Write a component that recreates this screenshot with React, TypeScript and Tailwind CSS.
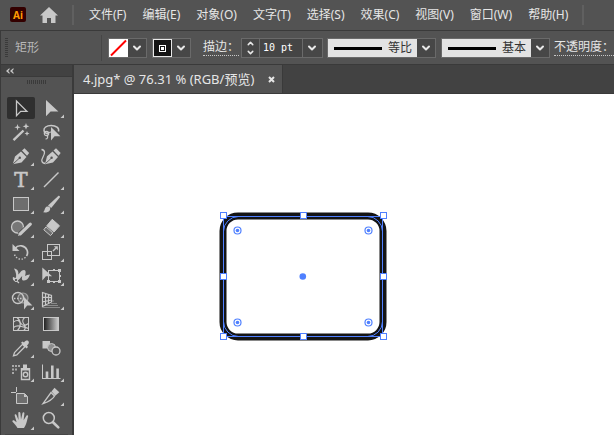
import React, { useState } from "react";
import { ChevronDown, ChevronUp } from "lucide-react";

const menus = ["文件(F)", "编辑(E)", "对象(O)", "文字(T)", "选择(S)", "效果(C)", "视图(V)", "窗口(W)", "帮助(H)"];

const C = "#c8c8c8";
const BG = "#535353";

type Tool = { name: string; more?: boolean; icon: React.ReactNode };

// every icon is drawn on a 30x24 cell
const tools: Tool[] = [
  {
    name: "选择工具",
    icon: <path d="M10.5 5v14.6l4.2-4.2h6.2z" fill="none" stroke={C} strokeWidth="1.3" />,
  },
  {
    name: "直接选择工具",
    more: true,
    icon: <path d="M10 4v16.3l4.6-4.8h7.8z" fill={C} />,
  },
  {
    name: "魔棒工具",
    icon: (
      <>
        <path d="M7.5 20.2L17.5 10.5" stroke={C} strokeWidth="2.4" />
        <path d="M11.5 4l.8 2.5 2.5.8-2.5.8-.8 2.5-.8-2.5-2.5-.8 2.5-.8zM20 3l.9 2.4 2.4.9-2.4.9L20 9.6l-.9-2.4-2.4-.9 2.4-.9zM21 11l.7 1.8 1.8.7-1.8.7-.7 1.8-.7-1.8-1.8-.7 1.8-.7z" fill={C} />
      </>
    ),
  },
  {
    name: "套索工具",
    icon: (
      <>
        <path d="M22.5 11.5c1-3.5-2.500-6-7.300-6s-7.700 2.300-7.200 5c.3 1.800 2 3 4.500 3.500" fill="none" stroke={C} strokeWidth="1.5" />
        <circle cx="10.5" cy="13.5" r="2.2" fill="none" stroke={C} strokeWidth="1.2" />
        <path d="M11 15.5c1.500 1.500.5 3.500-1.500 3.500M11 13l4-1" fill="none" stroke={C} strokeWidth="1.2" />
        <path d="M15 7v13.500l3.600-4.200h5.800z" fill={C} />
      </>
    ),
  },
  {
    name: "钢笔工具",
    more: true,
    icon: (
      <>
        <path d="M6.800 20.200L9 12.500 15 7.500l5.500 5.500-5 5.500z" fill={C} />
        <path d="M16 6.600L18.500 4.200 23.200 9l-2.200 2.700z" fill={C} />
        <path d="M7 20l6-5.500" stroke={BG} strokeWidth="0.9" />
        <circle cx="13.8" cy="13.8" r="1.2" fill={BG} />
      </>
    ),
  },
  {
    name: "曲率工具",
    icon: (
      <>
        <path d="M9 20.200l2-8L16.500 7.500l5.500 5.500-5 5.500z" fill={C} />
        <path d="M17.500 6.600L20 4.200 24.700 9l-2.200 2.700z" fill={C} />
        <path d="M9 20l6-5.500" stroke={BG} strokeWidth="0.9" />
        <circle cx="15.6" cy="13.8" r="1.2" fill={BG} />
        <path d="M5.500 5.500c4 .5 3.500 4 1.500 7.500s-1.500 6.500 2.500 6.500" fill="none" stroke={C} strokeWidth="1.3" />
      </>
    ),
  },
  {
    name: "文字工具",
    more: true,
    icon: (
      <text x="15" y="19" textAnchor="middle" fontFamily="DejaVu Serif, serif" fontSize="20" fill={C} stroke={C} strokeWidth="0.6">
        T
      </text>
    ),
  },
  {
    name: "直线段工具",
    more: true,
    icon: <path d="M8 19L22.5 4.5" stroke={C} strokeWidth="1.5" />,
  },
  {
    name: "矩形工具",
    more: true,
    icon: <rect x="7.5" y="5.5" width="15" height="13" fill="#6e6e6e" stroke={C} />,
  },
  {
    name: "画笔工具",
    more: true,
    icon: (
      <>
        <path d="M7 20.300c2-1 1.300-5.300 4.300-5.800 2.500-.3 3.700 2 2.400 3.900-1.400 2-4 2.300-6.700 1.900z" fill={C} />
        <path d="M12 13.600L22 4.200c1.200-1 2.400.2 1.700 1.300L15.200 16z" fill={C} />
      </>
    ),
  },
  {
    name: "Shaper 工具",
    more: true,
    icon: (
      <>
        <circle cx="11.5" cy="11" r="6" fill="#777" stroke={C} strokeWidth="1.3" />
        <path d="M13.5 18.5L24.5 8" stroke={BG} strokeWidth="5" />
        <path d="M14.5 17.7L24.3 8.2" stroke={C} strokeWidth="3.2" strokeLinecap="round" />
        <path d="M12 20l1-3.500 2.500 2.300z" fill={C} />
      </>
    ),
  },
  {
    name: "橡皮擦工具",
    more: true,
    icon: (
      <>
        <path d="M16.200 3.300l7.300 6.500-5.500 6.300-7.200-6.300z" fill={C} stroke={C} strokeLinejoin="round" />
        <path d="M10 10.800l6.900 6.200-2.400 2.600-6.700-5.800z" fill="#6e6e6e" stroke={C} strokeLinejoin="round" />
      </>
    ),
  },
  {
    name: "旋转工具",
    more: true,
    icon: (
      <>
        <path d="M9 8.500c3.500-4.500 10-3 12 1.500 1 2.500.5 4.500-.5 6" fill="none" stroke={C} strokeWidth="1.7" />
        <path d="M6.500 4v7h7z" fill={C} />
        <path d="M19.500 17.300c-3.500 3.200-9.500 2.500-11.500-4" fill="none" stroke={C} strokeWidth="1.4" strokeDasharray="1.4 1.6" />
      </>
    ),
  },
  {
    name: "比例缩放工具",
    more: true,
    icon: (
      <>
        <rect x="11.5" y="4.5" width="12" height="11" fill="none" stroke={C} />
        <rect x="6.5" y="11.5" width="9" height="8" fill="none" stroke={C} />
        <path d="M17 11l3-3" stroke={C} strokeWidth="1.4" />
        <path d="M17.800 6.300h4v4z" fill={C} />
      </>
    ),
  },
  {
    name: "宽度工具",
    more: true,
    icon: (
      <>
        <path d="M8 4.500c3.500.5 5 3 4.200 6 2-1.500 2.800-4.500 5.800-4.500 2.500.3 1.500 4 1 6 1.500-.5 3-1.500 5-1.500-1 3-3 6-6 6-2.500 0-2.300-2-1.800-4.500-2 2-4 5.500-7.200 5-2-.3-2.500-2-2-3.500 1-.3 2 0 2.500 1 1.500-3 .5-6-1.500-10z" fill={C} />
        <path d="M7 13.500l6 5.500" stroke={C} strokeWidth="1.2" />
        <circle cx="10" cy="16" r="1.6" fill={BG} stroke={C} />
      </>
    ),
  },
  {
    name: "自由变换工具",
    more: true,
    icon: (
      <>
        <rect x="12.5" y="6.5" width="11" height="11" fill="none" stroke={C} />
        <path d="M22 5h3v3h-3zM11 16h3v3h-3zM22 16h3v3h-3zM17 5h2v2h-2zM17 17h2v2h-2zM23 11h2v2h-2z" fill={C} />
        <path d="M6.300 3.500v13l3.600-4.300h6.200z" fill={C} />
      </>
    ),
  },
  {
    name: "形状生成器工具",
    more: true,
    icon: (
      <>
        <circle cx="17" cy="10" r="5" fill="#6a6a6a" stroke="#a0a0a0" strokeWidth="1.2" />
        <circle cx="12" cy="10" r="5.5" fill="none" stroke={C} strokeWidth="1.4" />
        <path d="M8 10.500h9" stroke={C} strokeWidth="1.5" strokeDasharray="1.5 1.5" />
        <path d="M18 9v12.500l3.200-4h5.200z" fill={C} />
      </>
    ),
  },
  {
    name: "透视网格工具",
    more: true,
    icon: (
      <>
        <path d="M15 13h3M15 15.500h6" stroke="#8a8a8a" strokeWidth="1.2" />
        <path d="M6.500 19.500H24M9 17.500h13" stroke="#8a8a8a" />
        <path d="M6.500 4.500v14l9-4.500V7.500zM6.500 9.200l9 .5M6.500 13.800l9-1.800M9.500 5.500V17M12.500 6.500v9" fill="none" stroke={C} strokeWidth="1.2" />
      </>
    ),
  },
  {
    name: "网格工具",
    icon: (
      <>
        <rect x="7.5" y="5.5" width="15" height="13" fill="none" stroke={C} />
        <path d="M7.500 10c4-3 6-1 7.500 1.500s4 2.500 7.500 0M11 5.500c4 3 4.500 9 .5 13M18.500 5.500c-3 3-2 5 0 7.500 1.200 2 .8 4-.5 5.500M7.500 15.500c3-2.500 6-1.500 8-1s4 .5 7 2" fill="none" stroke={C} strokeWidth="1.2" />
      </>
    ),
  },
  {
    name: "渐变工具",
    icon: (
      <>
        <defs>
          <linearGradient id="toolGradient">
            <stop offset="0" stopColor="#1c1c1c" />
            <stop offset="1" stopColor="#cfcfcf" />
          </linearGradient>
        </defs>
        <rect x="7.5" y="5.5" width="15" height="13" fill="url(#toolGradient)" stroke={C} />
      </>
    ),
  },
  {
    name: "吸管工具",
    more: true,
    icon: (
      <>
        <path d="M7.500 19.800l1-3.300 8-8.200 2.400 2.400-8.100 8.200z" fill="none" stroke={C} strokeWidth="1.3" />
        <path d="M15 6.800l1.500-1.300 1.500 1c1.500-2 3-2.500 4.300-1.500 1.200 1.300.7 2.800-1.300 4.500l1 1.500-1.500 1.500z" fill={C} />
      </>
    ),
  },
  {
    name: "混合工具",
    icon: (
      <>
        <rect x="6.5" y="5" width="7.5" height="7.5" fill={C} />
        <circle cx="15.5" cy="11.5" r="4" fill="#8d8d8d" stroke={C} />
        <circle cx="20" cy="15" r="4" fill={BG} stroke={C} strokeWidth="1.3" />
      </>
    ),
  },
  {
    name: "符号喷枪工具",
    more: true,
    icon: (
      <>
        <path d="M6 5h2v2H6zM9 5h2v2H9zM12 5h2v2h-2zM6 8.500h2v2H6zM9 8.500h2v2H9zM6 12h2v2H6z" fill="#a8a8a8" />
        <path d="M17 4.500h4V8h-4z" fill={C} />
        <path d="M15.500 8.700h8v10.800h-8z" fill="none" stroke={C} strokeWidth="1.4" />
        <path d="M15 8h9v2.500h-9z" fill={C} />
        <circle cx="19.5" cy="14.5" r="2.2" fill="none" stroke={C} strokeWidth="1.4" />
      </>
    ),
  },
  {
    name: "柱形图工具",
    more: true,
    icon: <path d="M6 4.500h1V18h17.500v1H6zM9.700 11.500h2.600V18H9.700zM15 5.500h2.600V18H15zM20.300 8.500h2.600V18h-2.600z" fill={C} />,
  },
  {
    name: "画板工具",
    icon: (
      <>
        <path d="M5 8.500h5M10.500 3v5" stroke={C} />
        <path d="M10.500 9.500h8l3 3v7h-11z" fill="#6e6e6e" stroke={C} />
        <path d="M18 9.500v3.500h3.500z" fill={C} />
      </>
    ),
  },
  {
    name: "切片工具",
    more: true,
    icon: (
      <>
        <path d="M7 19.700L15 8.500l3.500 3.500c-1.500 3-5.500 5.500-11.500 7.700z" fill="none" stroke={C} strokeWidth="1.3" />
        <path d="M15.500 7.500l3-3.800 4.800 4.500-4 3.500z" fill={C} />
      </>
    ),
  },
  {
    name: "抓手工具",
    more: true,
    icon: (
      <path
        d="M11.500 20c-1.500-2.500-3-4.500-5-6.300-.6-1 .8-1.800 1.800-1.200l2.300 1.700L8.700 7.500c-.3-1.300 1.300-1.700 1.800-.5l2 5L12.300 5c0-1.300 1.900-1.300 2.100 0l.6 6.500L16.500 5c.4-1.200 2-.9 1.900.4l-.8 6.800 2.800-4.500c.7-1 2.100-.3 1.700.9-1 3-1.300 8-4.100 11.400z"
        fill={C}
      />
    ),
  },
  {
    name: "缩放工具",
    icon: (
      <>
        <circle cx="12.8" cy="10" r="5.5" fill="none" stroke={C} strokeWidth="1.5" />
        <path d="M17 14.200l5.300 5.200" stroke={C} strokeWidth="2.6" strokeLinecap="round" />
      </>
    ),
  },
];

function Chevron() {
  return (
    <span className="flex h-full w-[18px] flex-none items-center justify-center bg-[#474747]">
      <ChevronDown size={12} strokeWidth={4} color="#e8e8e8" />
    </span>
  );
}

function Swatch({ label, children }: { label: string; children: React.ReactNode }) {
  return (
    <button type="button" aria-label={label} className="flex h-5 w-[39px] flex-none items-center border border-[#6a6a6a]">
      {children}
      <Chevron />
    </button>
  );
}

function StrokeSelect({ label, value }: { label: string; value: string }) {
  return (
    <div className="relative h-5 w-[109px] flex-none border border-[#6a6a6a]">
      <select
        aria-label={label}
        className="block h-full w-full appearance-none bg-[#e3e3e3] pl-[60px] text-[12px] leading-[18px] text-[#333] outline-none"
      >
        <option>{value}</option>
      </select>
      <span className="pointer-events-none absolute top-[8px] left-[6px] h-[3px] w-12 bg-black" />
      <span className="pointer-events-none absolute top-0 right-0 h-full">
        <Chevron />
      </span>
    </div>
  );
}

function Artwork() {
  const handles = [
    [9, 9], [89, 9], [169, 9],
    [9, 70], [169, 70],
    [9, 130], [89, 130], [169, 130],
  ];
  const corners = [[23, 24], [154, 24], [23, 116], [154, 116]];

  return (
    <svg width="180" height="140" viewBox="0 0 180 140" className="block">
      <rect x="9" y="10" width="160" height="121" rx="15" fill="none" stroke="#141414" strokeWidth="7" />
      <rect x="9.5" y="10.5" width="159" height="120" rx="15" fill="none" stroke="#4f80ff" />
      <rect x="9.5" y="10.5" width="159" height="120" fill="none" stroke="#4f80ff" />
      {handles.map(([x, y]) => (
        <rect key={`${x}-${y}`} x={x - 2.5} y={y - 2.5} width="6" height="6" fill="#fff" stroke="#4f80ff" />
      ))}
      {corners.map(([x, y]) => (
        <g key={`${x}-${y}`}>
          <circle cx={x + 0.5} cy={y + 0.5} r="3.5" fill="#fff" stroke="#4f80ff" strokeWidth="1.2" />
          <circle cx={x + 0.5} cy={y + 0.5} r="1.8" fill="#4f80ff" />
        </g>
      ))}
      <circle cx="88.8" cy="70.5" r="3.3" fill="#4f80ff" />
    </svg>
  );
}

export default function App() {
  const [active, setActive] = useState(0);
  const [weight, setWeight] = useState("10 pt");

  return (
    <div className="flex min-h-screen flex-col overflow-hidden bg-[#424242] font-['Noto_Sans','Noto_Sans_CJK_SC',sans-serif] text-[12px] leading-4 text-[#e6e6e6]">
      <header className="flex h-[31px] items-center border-b border-[#3a3a3a] bg-[#535353] pb-px pl-[10px] whitespace-nowrap">
        <span className="flex h-[15px] w-4 flex-none items-center justify-center rounded-[2px] bg-[#330000] text-[10px] font-bold text-[#ff9a00]">
          Ai
        </span>
        <button type="button" aria-label="主页" className="ml-[14px] flex-none">
          <svg width="18" height="16" viewBox="0 0 18 16" className="block">
            <path d="M9 0l9 8.500h-2.500V16h-4.500v-5H7v5H2.500V8.500H0z" fill={C} />
          </svg>
        </button>
        <span className="ml-[14px] h-5 w-[2px] flex-none bg-[#606060]" />
        <nav className="ml-[15px] flex gap-4">
          {menus.map((m) => (
            <button key={m} type="button">
              {m}
            </button>
          ))}
        </nav>
        <span className="ml-[14px] h-5 w-[2px] flex-none bg-[#606060]" />
      </header>

      <section className="flex h-[34px] items-center border-b border-l border-[#3a3a3a] bg-[#535353] pl-1 whitespace-nowrap">
        <span className="h-5 w-[3px] flex-none bg-[repeating-linear-gradient(#3a3a3a_0_1px,#535353_1px_2px)]" />
        <span className="ml-[7px] w-[86px] flex-none text-[#b8b8b8]">矩形</span>
        <span className="mr-1.5 h-[26px] w-px flex-none bg-[#464646]" />
        <Swatch label="填色">
          <svg width="19" height="18" viewBox="0 0 19 18" className="block flex-none">
            <rect width="19" height="18" fill="#fff" />
            <path d="M2 16.500L17 1.500" stroke="#f00" strokeWidth="2" />
          </svg>
        </Swatch>
        <span className="w-[5px] flex-none" />
        <Swatch label="描边颜色">
          <svg width="19" height="18" viewBox="0 0 19 18" className="block flex-none">
            <rect x="0.5" y="0.5" width="18" height="17" fill="#141414" stroke="#e8e8e8" />
            <rect x="6.5" y="6.5" width="6" height="6" fill="none" stroke="#fff" />
            <rect x="8" y="8" width="3" height="3" fill="#fff" />
          </svg>
        </Swatch>
        <label htmlFor="weight" className="ml-3 flex-none border-b border-dotted border-[#c8c8c8]">
          描边：
        </label>
        <div className="ml-[2px] flex h-5 w-[82px] flex-none items-center border border-[#6a6a6a] bg-[#474747]">
          <span className="flex h-full w-[18px] flex-none flex-col items-center justify-between border-r border-[#6a6a6a]">
            <button type="button" aria-label="增加">
              <ChevronUp size={9} strokeWidth={4} color="#e8e8e8" className="block" />
            </button>
            <button type="button" aria-label="减少">
              <ChevronDown size={9} strokeWidth={4} color="#e8e8e8" className="block" />
            </button>
          </span>
          <input
            id="weight"
            value={weight}
            onChange={(e) => setWeight(e.target.value)}
            className="h-full w-[43px] border-r border-[#6a6a6a] bg-[#454545] pl-[3px] font-['DejaVu_Sans_Mono',monospace] text-[10px] text-white outline-none"
          />
          <button type="button" aria-label="描边粗细" className="h-full">
            <Chevron />
          </button>
        </div>
        <span className="w-1 flex-none" />
        <StrokeSelect label="变量宽度配置文件" value="等比" />
        <span className="w-[5px] flex-none" />
        <StrokeSelect label="画笔定义" value="基本" />
        <button type="button" className="ml-1 flex-none border-b border-dotted border-[#c8c8c8]">
          不透明度：
        </button>
      </section>

      <main className="flex flex-1">
        <aside className="flex w-[74px] flex-none flex-col border-r-2 border-l border-[#3a3a3a] bg-[#535353]">
          <button type="button" aria-label="折叠" className="flex h-3 items-center border-b border-[#3a3a3a] bg-[#424242] pl-[5px]">
            <svg width="8" height="6" viewBox="0 0 8 6" className="block">
              <path d="M3.500 0v1.500L2.200 3l1.300 1.500V6L0 3zM7.500 0v1.500L6.200 3l1.300 1.500V6L4 3z" fill={C} />
            </svg>
          </button>
          <span className="mx-auto mt-[3px] h-1 w-[19px] bg-[repeating-linear-gradient(90deg,#3a3a3a_0_1px,#535353_1px_2px)]" />
          <div className="mt-3 ml-[5px] grid w-[60px] grid-cols-2">
            {tools.map((t, i) => (
              <button key={t.name} type="button" aria-label={t.name} aria-pressed={active === i} onClick={() => setActive(i)}>
                <svg width="30" height="24" viewBox="0 0 30 24" className="block">
                  {active === i && <rect x="1" y="1" width="28" height="22" rx="2" fill="#2f2f2f" />}
                  {t.icon}
                  {t.more && <path d="M28 18.500v3.500h-3.500z" fill={C} />}
                </svg>
              </button>
            ))}
          </div>
          <span className="mx-1 mt-[2px] h-px bg-[#464646]" />
        </aside>

        <div className="flex min-w-0 flex-1 flex-col">
          <div className="flex h-[29px] border-b border-[#3a3a3a]">
            <div className="flex w-[209px] items-center justify-between border-r border-[#3a3a3a] bg-[#535353] pr-[7px] pl-[9px] whitespace-nowrap">
              <span className="text-[13px]">4.jpg* @ 76.31 % (RGB/预览)</span>
              <button type="button" aria-label="关闭">
                <svg width="7" height="7" viewBox="0 0 7 7" className="block">
                  <path d="M1 1l5 5M6 1L1 6" stroke="#e6e6e6" strokeWidth="2" />
                </svg>
              </button>
            </div>
          </div>
          <div className="flex-1 bg-white pt-[112px] pl-[140px]">
            <Artwork />
          </div>
        </div>
      </main>
    </div>
  );
}
